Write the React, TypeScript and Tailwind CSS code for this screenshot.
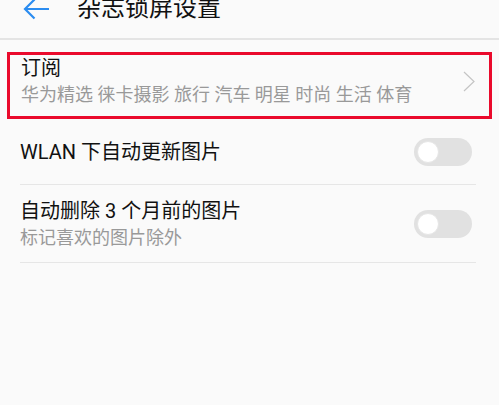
import React from 'react';

const FONT = "font-['Roboto','Noto_Sans_CJK_SC',sans-serif]";

const Toggle: React.FC = () => (
  <div className="flex h-[28px] w-[58px] shrink-0 items-center rounded-full bg-[#e1e1e1] pl-[3px]">
    <div className="h-[22px] w-[22px] rounded-full border border-[#e6e6e6] bg-white" />
  </div>
);

const ChevronRight: React.FC = () => (
  <svg width="12" height="21" viewBox="0 0 12 21" fill="none" className="shrink-0">
    <path d="M1 1 L11 10.5 L1 20" stroke="#c4c4c4" strokeWidth="1.2" />
  </svg>
);

const BackArrow: React.FC = () => (
  <svg width="27" height="22" viewBox="0 0 27 22" fill="none" className="shrink-0">
    <path d="M26 11 H2 M11.5 1.5 L2 11 L11.5 20.5" stroke="#2b8cf0" strokeWidth="2.2" />
  </svg>
);

export default function App() {
  const tags = ['华为精选', '徕卡摄影', '旅行', '汽车', '明星', '时尚', '生活', '体育'];

  return (
    <div className={`h-[405px] w-[499px] overflow-hidden bg-[#fafafa] ${FONT}`}>
      {/* header, partly scrolled off the top */}
      <div className="flex h-[38px] items-start">
        <div className="ml-[23px] mt-[-2px]">
          <BackArrow />
        </div>
        <div className="ml-[27px] mt-[-7px] text-[24px] leading-[30px] text-[#111]">杂志锁屏设置</div>
      </div>
      <div className="h-[2px] bg-[#e4e4e4]" />

      {/* subscription row (highlighted) */}
      <div className="mx-[7px] mt-[12px] flex items-center border-[3px] border-[#ea0a2c] pb-[10px] pl-[11px] pr-[14px] pt-[1px]">
        <div className="flex-1">
          <div className="text-[20px] leading-[24px] text-[#111]">订阅</div>
          <div className="mt-[4px] text-[18px] leading-[22px] text-[#999]">{tags.join(' ')}</div>
        </div>
        <ChevronRight />
      </div>

      <div className="ml-[20px] mr-[23px]">
        <div className="flex h-[66px] items-center border-b border-[#e6e6e6] pr-[4px]">
          <div className="flex-1 text-[20px] leading-[24px] text-[#111]">WLAN 下自动更新图片</div>
          <Toggle />
        </div>
        <div className="flex h-[78px] items-center border-b border-[#e6e6e6] pr-[4px]">
          <div className="flex-1">
            <div className="text-[20px] leading-[24px] text-[#111]">自动删除 3 个月前的图片</div>
            <div className="mt-[4px] text-[18px] leading-[22px] text-[#999]">标记喜欢的图片除外</div>
          </div>
          <Toggle />
        </div>
      </div>
    </div>
  );
}
